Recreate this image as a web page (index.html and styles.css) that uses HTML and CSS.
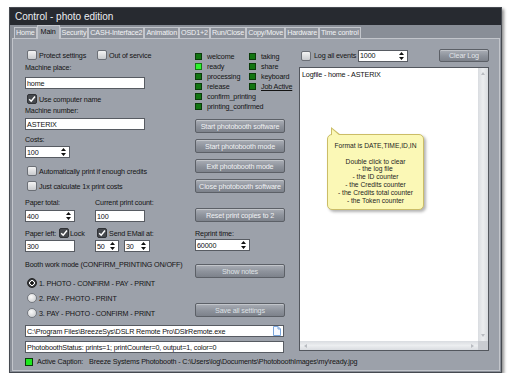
FILE: index.html
```html
<!DOCTYPE html>
<html lang="en">
<head>
    <meta charset="UTF-8">
    <meta name="viewport" content="width=device-width, initial-scale=1.0">
    <title>Control - photo edition</title>
    <link rel="stylesheet" href="styles.css">
</head>
<body>
    <div class="window">
        <div class="titlebar">Control - photo edition</div>

        <div class="tabs">
            <div class="tab">Home</div>
            <div class="tab active">Main</div>
            <div class="tab">Security</div>
            <div class="tab">CASH-Interface2</div>
            <div class="tab">Animation</div>
            <div class="tab">OSD1+2</div>
            <div class="tab">Run/Close</div>
            <div class="tab">Copy/Move</div>
            <div class="tab">Hardware</div>
            <div class="tab">Time control</div>
        </div>

        <div class="panel">
            <div class="left-col">
                <div class="pair mt3">
                    <div class="check"><span class="box"></span>Protect settings</div>
                    <div class="check"><span class="box"></span>Out of service</div>
                </div>
                <div class="label mt2">Machine place:</div>
                <div class="field wide mt4">home</div>
                <div class="check mt4">
                    <span class="box on"><svg width="10" height="10" viewBox="0 0 10 10"><path d="M2.2 5.2 L4.2 7.2 L8 2.6" stroke="#fff" stroke-width="1.5" fill="none"/></svg></span>Use computer name
                </div>
                <div class="label mt1">Machine number:</div>
                <div class="field wide mt2">ASTERIX</div>
                <div class="label mt5">Costs:</div>
                <div class="field spin-field w45 mt1">
                    <span class="value">100</span>
                    <svg class="spin" width="5" height="8" viewBox="0 0 5 8"><path d="M2.5 0 L5 3 H0Z M0 5 H5 L2.5 8Z" fill="#111"/></svg>
                </div>
                <div class="check mt7"><span class="box"></span>Automatically print if enough credits</div>
                <div class="check mt3"><span class="box"></span>Just calculate 1x print costs</div>

                <div class="pair mt6">
                    <div class="label">Paper total:</div>
                    <div class="label">Current print count:</div>
                </div>
                <div class="pair mt2">
                    <div class="field spin-field w50">
                        <span class="value">400</span>
                        <svg class="spin" width="5" height="8" viewBox="0 0 5 8"><path d="M2.5 0 L5 3 H0Z M0 5 H5 L2.5 8Z" fill="#111"/></svg>
                    </div>
                    <div class="field w50">100</div>
                </div>
                <div class="pair mt5">
                    <div class="inline-row">
                        <span class="paper-left">Paper left:</span>
                        <div class="check tight"><span class="box on"><svg width="10" height="10" viewBox="0 0 10 10"><path d="M2.2 5.2 L4.2 7.2 L8 2.6" stroke="#fff" stroke-width="1.5" fill="none"/></svg></span>Lock</div>
                    </div>
                    <div class="check">
                        <span class="box on"><svg width="10" height="10" viewBox="0 0 10 10"><path d="M2.2 5.2 L4.2 7.2 L8 2.6" stroke="#fff" stroke-width="1.5" fill="none"/></svg></span>Send EMail at:
                    </div>
                </div>
                <div class="pair mt1">
                    <div class="field w50">300</div>
                    <div class="inline-row">
                        <div class="field spin-field w24">
                            <span class="value">50</span>
                            <svg class="spin" width="5" height="8" viewBox="0 0 5 8"><path d="M2.5 0 L5 3 H0Z M0 5 H5 L2.5 8Z" fill="#111"/></svg>
                        </div>
                        <div class="field spin-field w26 ml5">
                            <span class="value">30</span>
                            <svg class="spin" width="5" height="8" viewBox="0 0 5 8"><path d="M2.5 0 L5 3 H0Z M0 5 H5 L2.5 8Z" fill="#111"/></svg>
                        </div>
                    </div>
                </div>

                <div class="label mt8">Booth work mode (CONFIRM_PRINTING ON/OFF)</div>
                <div class="check mt7"><span class="radio on"></span>1. PHOTO - CONFIRM - PAY - PRINT</div>
                <div class="check mt3"><span class="radio"></span>2. PAY - PHOTO - PRINT</div>
                <div class="check mt3"><span class="radio"></span>3. PAY - PHOTO - CONFIRM - PRINT</div>
            </div>

            <div class="mid-col">
                <div class="leds mt5">
                    <div class="led-item"><span class="led"></span>welcome</div>
                    <div class="led-item"><span class="led"></span>taking</div>
                    <div class="led-item"><span class="led lit"></span>ready</div>
                    <div class="led-item"><span class="led"></span>share</div>
                    <div class="led-item"><span class="led"></span>processing</div>
                    <div class="led-item"><span class="led"></span>keyboard</div>
                    <div class="led-item"><span class="led"></span>release</div>
                    <div class="led-item"><span class="led"></span><u>Job Active</u></div>
                    <div class="led-item"><span class="led"></span>confirm_printing</div>
                    <div class="led-item"></div>
                    <div class="led-item"><span class="led"></span>printing_confirmed</div>
                </div>
                <div class="btn mt8">Start photobooth software</div>
                <div class="btn mt6">Start photobooth mode</div>
                <div class="btn mt6">Exit photobooth mode</div>
                <div class="btn mt6">Close photobooth software</div>
                <div class="btn mt15">Reset print copies to 2</div>
                <div class="label mt7">Reprint time:</div>
                <div class="field spin-field w55">
                    <span class="value">60000</span>
                    <svg class="spin" width="5" height="8" viewBox="0 0 5 8"><path d="M2.5 0 L5 3 H0Z M0 5 H5 L2.5 8Z" fill="#111"/></svg>
                </div>
                <div class="btn dim mt13">Show notes</div>
                <div class="btn dim mt25">Save all settings</div>
            </div>

            <div class="right-col">
                <div class="log-bar mt3">
                    <div class="check"><span class="box"></span><span class="log-label">Log all events</span></div>
                    <div class="field spin-field w50">
                        <span class="value">1000</span>
                        <svg class="spin" width="5" height="8" viewBox="0 0 5 8"><path d="M2.5 0 L5 3 H0Z M0 5 H5 L2.5 8Z" fill="#111"/></svg>
                    </div>
                    <div class="btn small">Clear Log</div>
                </div>
                <div class="log-box mt5">
                    <div class="log-text">Logfile - home - ASTERIX</div>
                    <div class="vscroll">
                        <svg width="4" height="3" viewBox="0 0 4 3"><path d="M2 0 L4 3 H0Z" fill="#b9bcc1"/></svg>
                        <svg width="4" height="3" viewBox="0 0 4 3"><path d="M0 0 H4 L2 3Z" fill="#b9bcc1"/></svg>
                    </div>
                    <div class="hscroll">
                        <svg width="3" height="4" viewBox="0 0 3 4"><path d="M0 2 L3 0 V4Z" fill="#b9bcc1"/></svg>
                        <svg width="3" height="4" viewBox="0 0 3 4"><path d="M3 2 L0 0 V4Z" fill="#b9bcc1"/></svg>
                    </div>
                    <div class="corner"></div>

                    <div class="tooltip">
                        <div>Format is DATE,TIME,ID,IN</div>
                        <div>&nbsp;</div>
                        <div>Double click to clear</div>
                        <div>- the log file</div>
                        <div>- the ID counter</div>
                        <div>- the Credits counter</div>
                        <div>- the Credits total counter</div>
                        <div>- the Token counter</div>
                    </div>
                </div>
            </div>

            <div class="field path-field">
                <span class="value">C:\Program Files\BreezeSys\DSLR Remote Pro\DSlrRemote.exe</span>
                <svg width="8" height="10" viewBox="0 0 8 10"><path d="M0.5 0.5 H5 L7.5 3 V9.5 H0.5Z" fill="#f6f9ff" stroke="#7aa6dc"/><path d="M5 0.5 V3 H7.5" fill="none" stroke="#7aa6dc"/></svg>
            </div>
            <div class="field status-field">PhotoboothStatus: prints=1; printCounter=0, output=1, color=0</div>

            <div class="caption-row">
                <span class="caption-led"></span>
                <span class="caption-key">Active Caption:</span>
                <span class="caption-value">Breeze Systems Photobooth - C:\Users\log\Documents\PhotoboothImages\my\ready.jpg</span>
            </div>
        </div>
    </div>
</body>
</html>
```

FILE: styles.css
```css
* {
    margin: 0;
    padding: 0;
    box-sizing: border-box;
}

body {
    font-family: "Liberation Sans", Arial, sans-serif;
    font-size: 7.2px;
    letter-spacing: -0.15px;
    color: #141414;
    background-color: #fff;
}

.window {
    margin: 7px 0 0 9px;
    width: 493px;
    height: 366px;
    background-color: #898e97;
    border: 1px solid #464a51;
    box-shadow: 2px 2px 3px rgba(0, 0, 0, 0.45);
    display: flex;
    flex-direction: column;
}

.titlebar {
    height: 17px;
    line-height: 17px;
    padding-left: 5px;
    background-color: #272a30;
    color: #eceef1;
    font-size: 10px;
    letter-spacing: 0;
}

.tabs {
    height: 13px;
    margin-left: 4px;
    display: flex;
    align-items: flex-end;
}

.tab {
    height: 11px;
    line-height: 10px;
    padding: 0 1px;
    background-color: #8d929b;
    border: 1px solid #c3c6cc;
    border-bottom: none;
    color: #f2f3f5;
}

.tab.active {
    position: relative;
    z-index: 1;
    height: 14px;
    line-height: 12px;
    margin-bottom: -1px;
    padding: 0 3px;
    background-color: #a3a8b0;
    color: #111;
}

.panel {
    height: 333px;
    margin: 0 1px 0 2px;
    padding: 7px 0 0 12px;
    background-color: #9ca1aa;
    border: 1px solid #c2c5cb;
    display: grid;
    grid-template-columns: 170px 104px 190px;
    grid-template-rows: 279px 16px 16px auto;
}

.left-col,
.mid-col {
    grid-row: 1;
    display: flex;
    flex-direction: column;
    align-items: flex-start;
}

.left-col { grid-column: 1; }
.mid-col { grid-column: 2; }

.right-col {
    grid-column: 3;
    grid-row: 1 / 4;
    display: flex;
    flex-direction: column;
}

.mt1 { margin-top: 1px; }
.mt2 { margin-top: 2px; }
.mt3 { margin-top: 3px; }
.mt4 { margin-top: 4px; }
.mt5 { margin-top: 5px; }
.mt6 { margin-top: 6px; }
.mt7 { margin-top: 7px; }
.mt8 { margin-top: 8px; }
.mt13 { margin-top: 13px; }
.mt15 { margin-top: 15px; }
.mt25 { margin-top: 25px; }
.ml5 { margin-left: 5px; }

.label {
    height: 10px;
    line-height: 10px;
    white-space: nowrap;
}

.pair {
    display: grid;
    grid-template-columns: 70px 70px;
    align-items: center;
}

.inline-row {
    display: flex;
    align-items: center;
}

.paper-left {
    width: 34px;
    white-space: nowrap;
}

.check {
    height: 12px;
    padding-left: 2px;
    display: flex;
    align-items: center;
    gap: 2px;
    white-space: nowrap;
}

.check.tight {
    padding-left: 0;
    gap: 1px;
}

.box {
    width: 10px;
    height: 10px;
    flex-shrink: 0;
    border: 1px solid #6b6f76;
    border-radius: 2px;
    background: linear-gradient(#f4f4f4, #c9cbce);
    display: flex;
}

.box.on {
    background: #45484d;
    border-color: #303236;
}

.box svg {
    margin: -1px;
}

.radio {
    width: 10px;
    height: 10px;
    flex-shrink: 0;
    border: 1px solid #74787f;
    border-radius: 50%;
    background: radial-gradient(circle at 40% 35%, #fafafa, #c4c6c9);
}

.radio.on {
    border-color: #222;
    background: radial-gradient(circle, #111 0 1.5px, #fff 1.9px 2.6px, #34363a 3px);
}

.field {
    height: 12px;
    padding: 0 2px 0 1px;
    background-color: #fff;
    border: 1px solid #575b62;
    display: flex;
    align-items: center;
    white-space: nowrap;
    color: #111;
}

.field.wide { width: 120px; }
.w24 { width: 24px; }
.w26 { width: 26px; }
.w45 { width: 45px; }
.w50 { width: 50px; }
.w55 { width: 55px; }

.spin-field {
    padding-right: 3px;
}

.spin-field .value {
    flex: 1;
}

.spin {
    flex-shrink: 0;
}

.leds {
    display: grid;
    grid-template-columns: 54px auto;
    grid-auto-rows: 10px;
}

.led-item {
    display: flex;
    align-items: center;
    gap: 5px;
    white-space: nowrap;
}

.led {
    width: 7px;
    height: 7px;
    flex-shrink: 0;
    background-color: #127512;
    border: 1px solid #0a3b0a;
}

.led.lit {
    background-color: #2ef22e;
    border-color: #137a13;
}

.btn {
    width: 90px;
    height: 14px;
    flex-shrink: 0;
    border: 1px solid #5c6067;
    border-radius: 2px;
    background: linear-gradient(#aaaeb6, #8d929b 55%, #7d828b);
    box-shadow: inset 0 1px 0 rgba(255, 255, 255, 0.3);
    color: #f1f2f4;
    display: flex;
    align-items: center;
    justify-content: center;
    white-space: nowrap;
}

.btn.dim {
    color: #dfe2e6;
}

.btn.small {
    width: 50px;
    height: 13px;
    margin-left: auto;
    color: #e3e5e9;
}

.log-bar {
    height: 13px;
    display: flex;
    align-items: center;
}

.log-label {
    width: 44px;
    margin-left: 1px;
}

.log-box {
    position: relative;
    height: 284px;
    border: 1px solid #53575e;
    background-color: #fff;
    display: grid;
    grid-template-columns: 1fr 10px;
    grid-template-rows: 1fr 9px;
}

.log-text {
    padding: 2px 0 0 2px;
    color: #111;
}

.vscroll {
    background: linear-gradient(90deg, #d9dce0, #eceef0 50%, #d9dce0);
    display: flex;
    flex-direction: column;
    justify-content: space-between;
    align-items: center;
    padding: 4px 0;
}

.hscroll {
    background: linear-gradient(#d9dce0, #eceef0 50%, #d9dce0);
    display: flex;
    justify-content: space-between;
    align-items: center;
    padding: 0 4px;
}

.corner {
    background-color: #c9ccd1;
}

.tooltip {
    position: absolute;
    left: 27px;
    top: 66px;
    width: 97px;
    height: 76px;
    padding-top: 7px;
    background-color: #fbf8b6;
    border: 1px solid #cbbd67;
    border-radius: 5px;
    box-shadow: 2px 2px 3px rgba(0, 0, 0, 0.3);
    font-size: 6.7px;
    letter-spacing: 0;
    line-height: 7.8px;
    text-align: center;
    color: #1e1e1e;
}

.tooltip::before {
    content: "";
    position: absolute;
    left: 3px;
    top: -8px;
    border-bottom: 8px solid #cbbd67;
    border-right: 10px solid transparent;
}

.tooltip::after {
    content: "";
    position: absolute;
    left: 4px;
    top: -6px;
    border-bottom: 7px solid #fbf8b6;
    border-right: 8px solid transparent;
}

.path-field,
.status-field {
    grid-column: 1 / 3;
    width: 259px;
    height: 12px;
}

.path-field { grid-row: 2; }
.status-field { grid-row: 3; }

.path-field .value {
    flex: 1;
}

.caption-row {
    grid-column: 1 / 4;
    grid-row: 4;
    display: flex;
    align-items: center;
    height: 9px;
    white-space: nowrap;
}

.caption-led {
    width: 8px;
    height: 8px;
    flex-shrink: 0;
    background-color: #1ee81e;
    border: 1px solid #0d3b0d;
}

.caption-key {
    margin-left: 4px;
}

.caption-value {
    margin-left: 6px;
}
```
